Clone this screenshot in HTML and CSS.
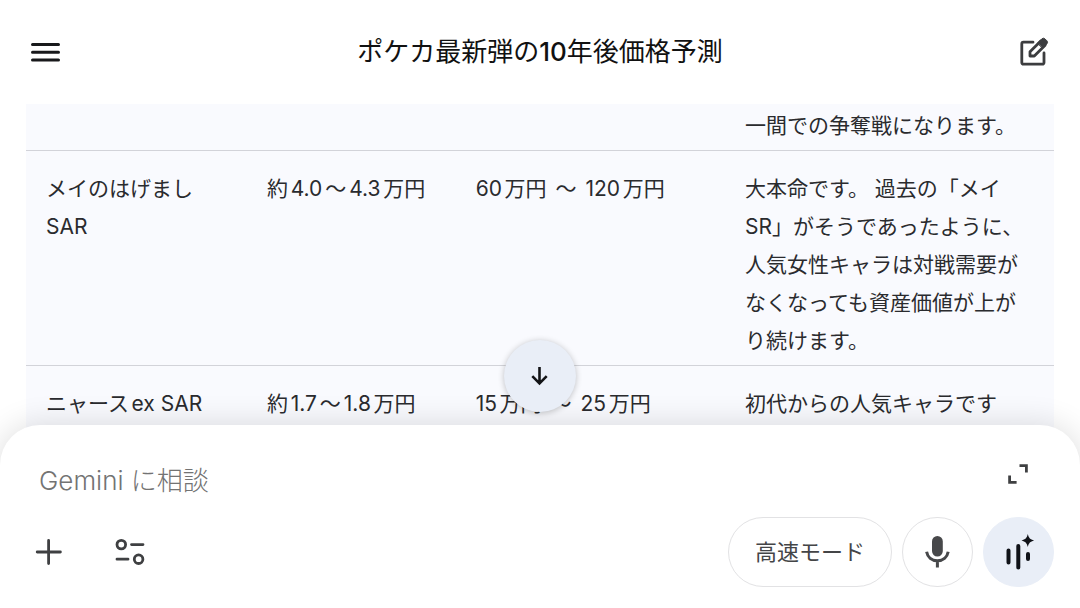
FILE: index.html
```
<!DOCTYPE html>
<html lang="ja">
<head>
<meta charset="utf-8">
<meta name="viewport" content="width=device-width, initial-scale=1">
<title>ポケカ最新弾の10年後価格予測</title>
<link rel="stylesheet" href="styles.css">
</head>
<body>
<div class="app">
  <header class="topbar">
    <button class="icon-button" type="button" aria-label="メニュー">
      <svg width="30" height="20" viewBox="0 0 30 20" fill="none" stroke="#18191b" stroke-width="3" stroke-linecap="round"><path d="M1.5 2.500h26M1.500 10.200h26M1.500 18h26"/></svg>
    </button>
    <h1 class="title">ポケカ最新弾の<span class="title-number">10</span>年後価格予測</h1>
    <button class="icon-button" type="button" aria-label="新しいチャット">
      <svg width="30" height="30" viewBox="0 0 30 30" fill="none" stroke="#3c3d3f" stroke-width="2.8" stroke-linejoin="round" stroke-linecap="round"><path d="M14 5.200H4.400a1.600 1.600 0 0 0-1.600 1.600v18.800a1.600 1.600 0 0 0 1.600 1.600h19a1.600 1.600 0 0 0 1.600-1.600V16"/><path d="M11 19v-4.300L21.800 3.900l4.300 4.300L15.300 19z"/><path d="M18.700 6l4.200-4.200q1.600-1.200 3 0l2 2q1.300 1.500.1 3l-4.200 4.200z" fill="#3c3d3f" stroke-width="1"/></svg>
    </button>
  </header>

  <main class="conversation">
    <table class="prices">
      <colgroup><col class="col-card"><col class="col-now"><col class="col-future"><col class="col-reason"></colgroup>
      <tbody>
        <tr class="continued"><td></td><td></td><td></td><td>一間での争奪戦になります。</td></tr>
        <tr><td>メイのはげまし SAR</td><td>約4.0<span class="range">〜</span>4.3万円</td><td>60万円 <span class="range">〜</span> 120万円</td><td>大本命です。 過去の「メイ SR」がそうであったように、人気女性キャラは対戦需要がなくなっても資産価値が上がり続けます。</td></tr>
        <tr><td>ニャースex SAR</td><td>約1.7<span class="range">〜</span>1.8万円</td><td>15万円 <span class="range">〜</span> 25万円</td><td>初代からの人気キャラです</td></tr>
      </tbody>
    </table>
  </main>

  <form class="composer">
    <button class="scroll-down" type="button" aria-label="一番下へ移動">
      <svg width="18" height="20" viewBox="0 0 18 20" fill="none" stroke="#121316" stroke-width="2.6"><path d="M8.500 1v16M1.300 10.200l7.200 7.200 7.200-7.200"/></svg>
    </button>
    <div class="prompt-row">
      <input class="prompt" type="text" aria-label="Gemini に相談" placeholder="Gemini に相談">
      <button class="icon-button expand" type="button" aria-label="全画面に拡大">
        <svg width="20" height="20" viewBox="0 0 20 20" fill="none" stroke="#3f4042" stroke-width="2.8"><path d="M11.500 1.600h6.900v7M1.600 11.500v6.900h7"/></svg>
      </button>
    </div>
    <div class="tools-row">
      <button class="icon-button" type="button" aria-label="追加">
        <svg width="26" height="26" viewBox="0 0 26 26" fill="none" stroke="#3f4042" stroke-width="2.8" stroke-linecap="round"><path d="M12.600 1.400v23.200M1.200 13h23.200"/></svg>
      </button>
      <button class="icon-button" type="button" aria-label="ツール">
        <svg width="30" height="28" viewBox="0 0 30 28" fill="none" stroke="#3f4042" stroke-width="2.8" stroke-linecap="round"><circle cx="6.300" cy="6.600" r="4.300"/><path d="M16.500 6.600H28M2 21.200h11"/><circle cx="23.600" cy="21.200" r="4.300"/></svg>
      </button>
      <div class="actions">
        <button class="mode" type="button">高速モード</button>
        <button class="round" type="button" aria-label="音声入力">
          <svg width="26" height="32" viewBox="0 0 26 32" fill="none" stroke="#47484a" stroke-width="3"><rect x="7" y="0" width="10.800" height="20.500" rx="5.400" fill="#47484a" stroke="none"/><path d="M1.600 15.800c.9 5.300 5.200 8.900 10.800 8.900s9.900-3.600 10.800-8.900M12.400 25v6.500"/></svg>
        </button>
        <button class="round live" type="button" aria-label="Live を開始">
          <svg width="28" height="36" viewBox="0 0 28 36" fill="none" stroke="#101218" stroke-width="4" stroke-linecap="round"><path d="M3.500 16.500v12M13.300 12v21.500M23 20v5"/><path d="M22.800 0c1.100 4.200 2.300 5.400 6.300 6.500-4 1.100-5.200 2.300-6.300 6.500-1.100-4.200-2.300-5.400-6.300-6.500 4-1.100 5.200-2.300 6.300-6.500z" fill="#101218" stroke="none"/></svg>
        </button>
      </div>
    </div>
  </form>
</div>
</body>
</html>
```
FILE: styles.css
```
* {
  box-sizing: border-box;
}

body {
  margin: 0;
  background: #fff;
  color: #2a2b2e;
  font-family: Inter, "Noto Sans CJK JP", sans-serif;
  text-autospace: normal;
}

button,
input {
  margin: 0;
  border: 0;
  padding: 0;
  background: none;
  color: inherit;
  font: inherit;
}

svg {
  display: block;
  overflow: visible;
}

.app {
  display: flex;
  flex-direction: column;
  height: 100vh;
}

.topbar {
  display: flex;
  flex: none;
  align-items: center;
  justify-content: space-between;
  height: 104px;
  padding: 0 31px;
}

.icon-button {
  flex: none;
}

.title {
  margin: 0;
  color: #111;
  font-size: 26px;
  font-weight: 400;
  line-height: 40px;
  text-autospace: no-autospace;
}

.title-number {
  font-weight: 500;
}

.conversation {
  flex: 1;
  min-height: 0;
  padding: 0 26px;
  overflow: hidden;
}

.prices {
  width: 100%;
  border-collapse: separate;
  border-spacing: 0;
  table-layout: fixed;
  background: #f9fafe;
  font-size: 21px;
  line-height: 38px;
}

.col-card {
  width: 21.5%;
}

.col-now {
  width: 20.3%;
}

.col-future {
  width: 26.2%;
}

.col-reason {
  width: 32%;
}

.prices td {
  border-bottom: 1px solid #d2d3d9;
  padding: 19px 20px 5px;
  vertical-align: top;
}

.prices .continued td {
  padding-top: 3px;
}

.prices tr:last-child td {
  padding-bottom: 60px;
}

.range {
  margin: 0 3px;
}

.composer {
  position: relative;
  flex: none;
  margin-top: -44px;
  border-radius: 40px 40px 0 0;
  padding: 28px 26px 21px 36px;
  background: #fff;
  box-shadow: 0 0 32px rgba(0, 0, 0, 0.14);
}

.scroll-down {
  position: absolute;
  bottom: calc(100% + 13px);
  left: 50%;
  display: grid;
  width: 72px;
  height: 72px;
  margin-left: -36px;
  border-radius: 50%;
  place-items: center;
  background: #e9eef7;
  box-shadow: 0 1px 6px rgba(0, 0, 0, 0.24);
}

.prompt-row {
  display: flex;
  align-items: flex-start;
  padding-right: 26px;
}

.prompt {
  flex: 1;
  min-width: 0;
  height: 52px;
  padding: 2px 0 0 3px;
  font-size: 26px;
  outline: 0;
}

.prompt::placeholder {
  color: #737373;
  font-weight: 300;
  opacity: 1;
}

.expand {
  padding-top: 11px;
}

.tools-row {
  display: flex;
  align-items: center;
  gap: 53px;
  margin-top: 12px;
}

.actions {
  display: flex;
  gap: 10px;
  margin-left: auto;
}

.mode,
.round {
  height: 70px;
  border: 1px solid #e2e2e4;
  border-radius: 35px;
}

.mode {
  padding: 0 26px 4px;
  color: #444547;
  font-size: 22px;
}

.round {
  display: grid;
  width: 71px;
  place-items: center;
}

.live {
  border-color: #e9eef7;
  background: #e9eef7;
}
```
